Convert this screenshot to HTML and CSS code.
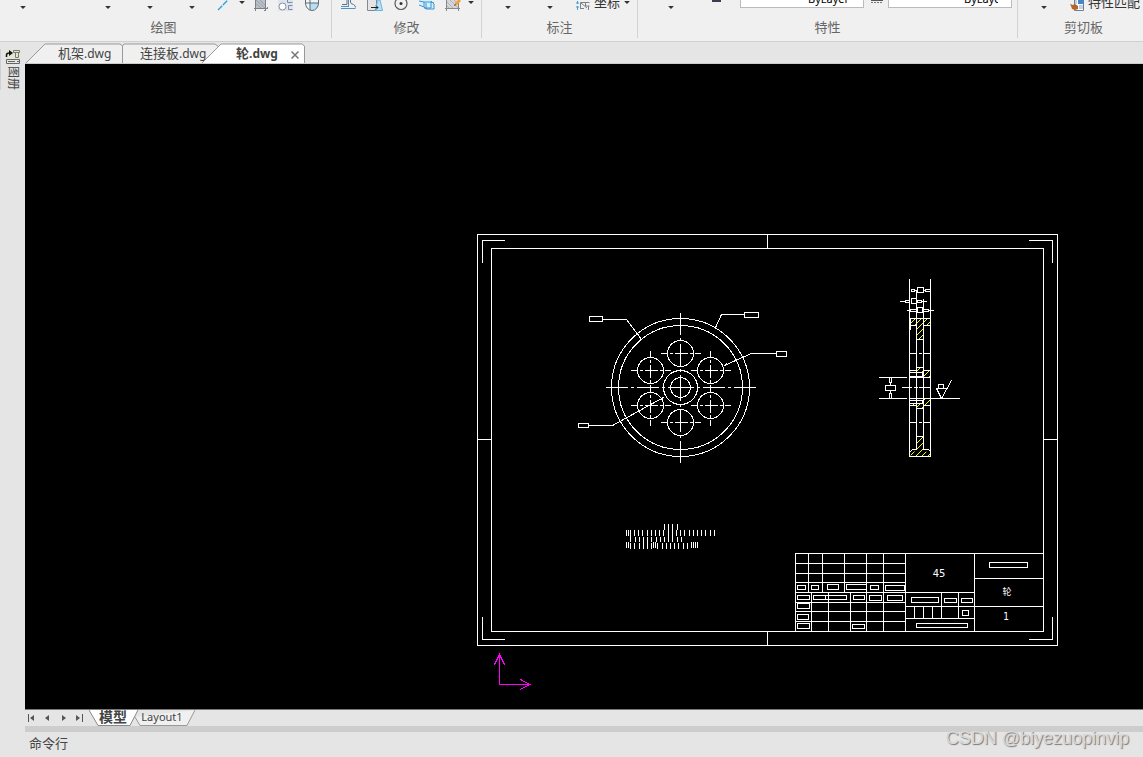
FILE: index.html
```html
<!DOCTYPE html>
<html lang="zh-CN">
<head>
<meta charset="utf-8">
<title>轮.dwg</title>
<link rel="stylesheet" href="styles.css">
</head>
<body>
<div class="app">
  <header class="ribbon">
    <section class="group group-draw">
      <div class="tools">
        <button class="tool tool-first" aria-label="直线"><span class="caret"></span></button>
        <button class="tool tool-large" aria-label="圆"><span class="caret"></span></button>
        <button class="tool tool-large" aria-label="圆弧"><span class="caret"></span></button>
        <button class="tool tool-large" aria-label="椭圆"><span class="caret"></span></button>
        <button class="tool tool-line" aria-label="构造线"><svg class="icon" width="14" height="12" viewBox="0 0 14 12"><path d="M1 10L11 0" stroke="#2a9fe0" stroke-width="1.3" stroke-dasharray="6 1"/></svg></button>
        <button class="tool tool-caret tool-caret-wide" aria-label="更多构造线"><span class="caret caret-high"></span></button>
        <button class="tool tool-fill" aria-label="图案填充"><svg class="icon" width="16" height="12" viewBox="0 0 16 12"><path d="M2 0h10v8H2z" fill="#bcc1c8"/><path d="M3 0l9 8M7 0l5 5M2 3l6 5" stroke="#989ea7"/><path d="M1 8.500h14M12.500 0v11M2.500 0v11M11 11l4-4" stroke="#7c8189"/></svg></button>
        <button class="tool" aria-label="面域"><svg class="icon" width="16" height="12" viewBox="0 0 16 12"><path d="M0 0h15v11H0z" fill="#dfe3ee"/><circle cx="4.500" cy="6.500" r="3.500" fill="#fff" stroke="#8a8fa3"/><path d="M9.500 0v2.500h5M14.500 5.500h-4v4h4" stroke="#7e88a8" fill="none"/></svg></button>
        <button class="tool" aria-label="圆柱"><svg class="icon" width="16" height="12" viewBox="0 0 16 12"><path d="M1 2a7 8 0 0 0 14 0V0H1z" fill="#eef5fa"/><path d="M6 3h9a8 8 0 0 1-9 7z" fill="#b6def5"/><path d="M1.500 0v3a6.500 7.500 0 0 0 13 0V0M1 3h13.500M6 0v10" stroke="#626a73" fill="none"/></svg></button>
      </div>
      <h2 class="group-title">绘图</h2>
    </section>
    <section class="group group-modify">
      <div class="tools">
        <button class="tool" aria-label="偏移"><svg class="icon" width="16" height="12" viewBox="0 0 16 12" fill="none"><path d="M1 4.500h5V0M9.500 0v2q0 2 3 2.500 2 1 2 3" stroke="#6a737d"/><path d="M0 6.500h8M0 8.500h14.500" stroke="#4c94c8"/><path d="M7.500 0v6" stroke="#4c94c8"/></svg></button>
        <button class="tool" aria-label="拉伸"><svg class="icon" width="16" height="12" viewBox="0 0 16 12"><path d="M0.500 0v10.500h9V0" fill="#e4e4e6" stroke="#888"/><path d="M11 0h2l2.500 10.500H8z" fill="#b7e1f8" stroke="#65b4df"/><path d="M4 7.500h7M9 5.500l2 2-2 2" stroke="#222" fill="none"/></svg></button>
        <button class="tool" aria-label="旋转"><svg class="icon" width="16" height="12" viewBox="0 0 16 12" fill="none"><circle cx="8" cy="3.500" r="6" stroke="#555a60" stroke-width="1.200"/><circle cx="8" cy="3.500" r="1.500" fill="#333"/></svg></button>
        <button class="tool" aria-label="分解"><svg class="icon" width="16" height="12" viewBox="0 0 16 12"><path d="M1 0v5l3 1h3l2 3h6V4l-2-4z" fill="#d5effc"/><path d="M0 1l5 1v5L0 5M5 2h7v6H5M5 7l2 2h8V4l-3-3M7 3v6M12 2l3 1" fill="none" stroke="#3a94cf"/></svg></button>
        <button class="tool" aria-label="编辑填充"><svg class="icon" width="16" height="12" viewBox="0 0 16 12"><path d="M2 0h11v9H2z" fill="#d4d6da"/><path d="M2 2l7 7M5 0l8 8M2 6l3 3M9 0l4 4" stroke="#aeb3b9"/><path d="M0 8.500h15M1.500 0v11M13.500 1v10" stroke="#888" fill="none"/><path d="M9 6l1-3 4-4 2 2-4 4z" fill="#efa13b"/><path d="M9 6l1-2 1 1z" fill="#444"/></svg></button>
        <button class="tool tool-caret" aria-label="更多修改"><span class="caret caret-high"></span></button>
      </div>
      <h2 class="group-title">修改</h2>
    </section>
    <section class="group group-dim">
      <div class="tools">
        <button class="tool tool-open" aria-label="标注"><span class="caret"></span></button>
        <button class="tool tool-medium" aria-label="引线"><span class="caret"></span></button>
        <button class="tool tool-text"><svg class="icon" width="14" height="12" viewBox="0 0 14 12" fill="none"><path d="M1.500 1v3M1.500 6v4M0 3h3M0 7h3" stroke="#4c9fd2"/><path d="M4.500 9V2.500h9M5 3l6 5M9.500 3v3h4M4 8.500h4M12.500 6v4" stroke="#7c8189"/></svg><span class="tool-label">坐标</span></button>
        <button class="tool tool-caret tool-caret-wide" aria-label="更多坐标"><span class="caret caret-high"></span></button>
      </div>
      <h2 class="group-title">标注</h2>
    </section>
    <section class="group group-props">
      <div class="tools">
        <button class="tool tool-props" aria-label="图层特性"><span class="caret"></span></button>
        <button class="tool" aria-label="线宽"><svg class="icon" width="10" height="12" viewBox="0 0 10 12"><path d="M0 0h9v2H0z" fill="#3a3d50"/></svg></button>
        <select class="combo combo-type" aria-label="线型"><option>ByLayer</option></select>
        <button class="tool" aria-label="比例"><svg class="icon" width="12" height="12" viewBox="0 0 12 12"><path d="M0 0.500h12" stroke="#555"/><path d="M0 2.500h12" stroke="#777" stroke-dasharray="2 1"/></svg></button>
        <select class="combo combo-weight" aria-label="线宽值"><option>ByLayer</option></select>
      </div>
      <h2 class="group-title">特性</h2>
    </section>
    <section class="group group-clip">
      <div class="tools">
        <button class="tool tool-open" aria-label="粘贴"><span class="caret"></span></button>
        <button class="tool tool-match"><svg class="icon" width="16" height="12" viewBox="0 0 16 12"><path d="M4.500 0v10.500h9V0" fill="#fff" stroke="#777e88"/><path d="M8 0h6v4H8z" fill="#4a86c4"/><path d="M5 1h2M5 3h2M9 6h4M9 8h4" stroke="#7ba4d0"/><path d="M0 4l3 1 2-1 3 2v3l-3 1-3-1-1-3z" fill="#b2662a"/></svg><span class="tool-label">特性匹配</span></button>
      </div>
      <h2 class="group-title">剪切板</h2>
    </section>
  </header>

  <div class="workspace">
    <aside class="side">
      <button class="side-tab">
        <svg width="16" height="16" viewBox="0 0 16 16" fill="none"><path d="M0 0h16v10H0z" fill="#e4e5d2"/><path d="M1.500 8V6q0-2 3-2" stroke="#111" stroke-width="1.500"/><path d="M4 1l4 3-4 3z" fill="#111"/><path d="M8.500 1.500h6v2h-6zM10.500 3.500v5h3v-5" stroke="#777"/><path d="M1.500 10.500h13v4h-13zM3 12.500h7M12 12.500h2" stroke="#666"/></svg>
        <span class="side-label">图册</span>
      </button>
    </aside>

    <main class="document">
      <nav class="file-tabs" aria-label="文件">
        <button class="file-tab">
          <svg class="file-shape" viewBox="0 0 98 20" preserveAspectRatio="none"><path d="M1 20L20 1H95L97.500 3V20" fill="#f0f0f0" stroke="#999"/></svg>
          <span class="file-name">机架<span class="file-ext">.dwg</span></span>
        </button>
        <button class="file-tab file-tab-next">
          <svg class="file-shape" viewBox="0 0 98 20" preserveAspectRatio="none"><path d="M0.500 20V3L2 1H93L97 4V20" fill="#f0f0f0" stroke="#999"/></svg>
          <span class="file-name">连接板<span class="file-ext">.dwg</span></span>
        </button>
        <button class="file-tab file-tab-active" aria-current="page">
          <svg class="file-shape" viewBox="0 0 104 20" preserveAspectRatio="none"><path d="M1 20L20 1H101L103.500 3V20" fill="#fff" stroke="#999"/></svg>
          <span class="file-name">轮<span class="file-ext">.dwg</span></span>
          <svg class="file-close" width="8" height="8" viewBox="0 0 8 8"><path d="M0.500 0.500l7 7M7.500 0.500l-7 7" stroke="#777" stroke-width="1.500"/></svg>
        </button>
      </nav>

      <div class="canvas">
        <svg class="drawing" viewBox="25 64 1118 645" preserveAspectRatio="xMinYMin meet" role="img" aria-label="轮">
          <defs>
            <clipPath id="section">
              <path d="M910 318H930V325H910ZM916 325H923V339H916ZM916 367H923V370H930V377H923V372H910V370H916ZM923 398H930V405H923V408H916V405H910V403H923ZM916 436H923V450L930 453V456H910V453L916 450Z"/>
            </clipPath>
          </defs>
          <g class="lines" transform="translate(0.5 0.5)">
            <!-- wheel, section hatching -->
            <path class="hatching" clip-path="url(#section)" d="M909 324l22-22M909 330l22-22M909 336l22-22M909 342l22-22M909 348l22-22M909 354l22-22M909 372l22-22M909 378l22-22M909 384l22-22M909 390l22-22M909 396l22-22M909 408l22-22M909 414l22-22M909 420l22-22M909 426l22-22M909 444l22-22M909 450l22-22M909 456l22-22M909 462l22-22M909 468l22-22M909 474l22-22"/>

            <!-- sheet frame -->
            <path d="M477 234H1057V645H477ZM491 248H1043V631H491ZM767 234V248M767 631V645M477 439H491M1043 439H1057"/>
            <path d="M482 262V240H504M1029 240H1052V262M482 617V639H504M1029 639H1052V617"/>

            <!-- wheel, front view -->
            <circle cx="680" cy="387" r="69"/><circle cx="680" cy="387" r="62"/>
            <circle cx="680" cy="387" r="17"/><circle cx="680" cy="387" r="10"/>
            <circle cx="680" cy="353" r="13"/><circle cx="710" cy="370" r="13"/><circle cx="710" cy="405" r="13"/>
            <circle cx="680" cy="422" r="13"/><circle cx="650" cy="405" r="13"/><circle cx="650" cy="370" r="13"/>
            <path class="axis" d="M605 387H680M755 387H680M680 312V387M680 462V387"/>
            <path d="M671 387H689M680 377V397"/>
            <path class="axis-short" d="M660 353H700M690 370H730M690 405H730M660 422H700M630 405H670M630 370H670M710 350V390M710 385V425M650 350V390M650 385V425"/>
            <path d="M589 316H602V321H589ZM603 319H626L641 339M744 312H758V317H744ZM744 314H721L715 327M776 351H786V356H776ZM776 353H751L724 365M578 423H588V427H578ZM588 425H612L663 397"/>
            <path d="M637 333L641 339M726 363L724 365"/>

            <!-- wheel, section -->
            <path d="M909 279V456M930 279V456M910 318H930M916 290V449M923 299V449M910 318V329M916 339H923M909 325H916M923 325H930M909 370H916M923 370H930M916 367H923M909 377H930M910 372H922V376H910M909 398H930M910 400H922V403H910M909 405H916M923 405H930M916 408H923M916 436H923M909 456H930M910 451L912 449H916M930 451L928 449H923"/>
            <path d="M909 353H915M919 353H921M924 353H930M909 422H915M919 422H921M924 422H930M902 387H911M914 387H917M919 387H930"/>
            <path class="boxed" d="M911 289H914V291H911ZM917 287H923V292H917ZM925 289H930V291H925ZM905 300H909V302H905ZM911 298H916V303H911ZM917 300H921V302H917ZM910 309H916V311H910ZM917 307H922V312H917ZM923 309H928V311H923Z"/>
            <path d="M900 301H905M921 301H926M907 310H910M928 310H933M914 290H917M923 290H925"/>
            <path d="M879 377H906M879 398H906M930 398H959M890 382V385M890 390V393"/>
            <path class="boxed" d="M889 377H891V382H889ZM885 385H895V390H885ZM889 393H891V398H889ZM938 384H943V388H938Z"/>
            <path d="M936 388H946M936 388L941 398L951 380"/>

            <!-- technical notes, greeked at this zoom -->
            <path d="M664 524v5M668 524v10M672 524v10M677 524v5"/>
            <path d="M626 530v5M628 530v5M630 530v11M634 530v5M638 530v5M642 530v5M647 530v5M651 530v5M655 530v5M659 530v5M663 530v5M668 530v11M672 530v11M676 530v5M680 530v5M684 530v5M689 530v5M693 530v5M697 530v5M701 530v5M705 530v5M710 530v5M714 530v5"/>
            <path d="M635 537v4M639 537v4M643 537v11M647 537v11M651 537v4M656 537v4M660 537v4M664 537v4M677 537v4M681 537v4"/>
            <path d="M626 542v5M628 542v5M630 543v5M634 543v5M639 543v5M651 543v5M653 542v5M655 542v5M657 543v5M662 543v5M666 543v5M670 543v5M674 543v5M678 543v5M683 543v5M687 543v5M691 542v5M693 542v5M695 542v5M697 542v5"/>

            <!-- title block -->
            <path d="M795 631V553H1043M795 563H905M795 573H905M795 582H905M795 592H974M795 602H905M795 611H905M795 621H905M808 553V592M822 553V592M844 553V592M811 592V631M828 592V631M850 592V631M866 553V631M883 553V631M905 553V631M974 553V631"/>
            <path d="M905 606H1043M905 618H974M941 592V618M958 592V618M914 606V618M923 606V618M932 606V618M974 578H1043"/>
            <path d="M797 585H805V589H797ZM811 585H818V589H811ZM827 584H838V589H827ZM846 584H866V589H846ZM870 585H878V589H870ZM885 585H904V590H885ZM797 595H809V599H797ZM813 595H846V599H813ZM825 595V599M853 595H864V599H853ZM869 595H881V600H869ZM887 595H902V600H887ZM797 603H809V608H797ZM797 614H808V619H797ZM797 623H809V628H797ZM852 624H864V628H852Z"/>
            <path d="M911 597H938V602H911ZM944 598H956V602H944ZM961 598H972V602H961ZM962 610H968V615H962ZM916 623H967V627H916ZM989 562H1027V567H989Z"/>

            <!-- UCS icon -->
            <path class="ucs" d="M499 654V684H529M494 664L499 654L504 664M520 679L529 684L520 689"/>
          </g>
          <g class="drawing-text">
            <text x="939" y="577">45</text>
            <text x="1007" y="595" class="drawing-name">轮</text>
            <text x="1006" y="620" class="drawing-count">1</text>
          </g>
        </svg>
      </div>

      <nav class="layout-tabs" aria-label="布局">
        <button class="step" aria-label="第一个"><svg width="8" height="8" viewBox="0 0 8 8"><path d="M1 0h1v8H1zM7 1v6L3 4z" fill="#555"/></svg></button>
        <button class="step" aria-label="上一个"><svg width="8" height="8" viewBox="0 0 8 8"><path d="M6 1v6L2 4z" fill="#555"/></svg></button>
        <button class="step" aria-label="下一个"><svg width="8" height="8" viewBox="0 0 8 8"><path d="M3 1v6l4-3z" fill="#555"/></svg></button>
        <button class="step" aria-label="最后一个"><svg width="8" height="8" viewBox="0 0 8 8"><path d="M7 0h1v8H7zM1 1v6l4-3z" fill="#555"/></svg></button>
        <button class="layout-tab layout-tab-active" aria-current="page">
          <svg class="layout-shape" viewBox="0 0 50 16" preserveAspectRatio="none"><path d="M0 0L9 15.500H41L49 0" fill="#fff" stroke="#888"/></svg>
          <span class="layout-name">模型</span>
        </button>
        <button class="layout-tab layout-tab-next">
          <svg class="layout-shape" viewBox="0 0 62 16" preserveAspectRatio="none"><path d="M1 7L6 15.500H53L61 0" fill="#f0f0f0" stroke="#999"/></svg>
          <span class="layout-name">Layout1</span>
        </button>
      </nav>
      <footer class="command"><label for="command">命令行</label><input class="command-input" id="command" type="text"></footer>
    </main>
  </div>
  <p class="watermark">CSDN @biyezuopinvip</p>
</div>
</body>
</html>
```
FILE: styles.css
```css
* {
  box-sizing: border-box;
}

body {
  margin: 0;
  background: #e5e5e5;
  color: #444;
  font: 13px/16px "Noto Sans", "Noto Sans CJK SC", sans-serif;
}

button {
  margin: 0;
  padding: 0;
  border: 0;
  background: none;
  color: inherit;
  font: inherit;
}

.app {
  position: relative;
  display: flex;
  flex-direction: column;
  height: 100vh;
  overflow: hidden;
}

/* ribbon */

.ribbon {
  display: flex;
  flex: none;
  padding-bottom: 3px;
  border-bottom: 1px solid #d0d0d0;
  background: #f0f0f0;
}

.group {
  display: flex;
  flex-direction: column;
  flex: none;
  gap: 7px;
  border-right: 1px solid #d2d2d2;
}

.group-draw { width: 332px; }
.group-modify { width: 150px; }
.group-dim { width: 156px; }
.group-props { width: 380px; }

.group-clip {
  flex: 1 0 0;
  min-width: 0;
  border-right: 0;
}

.group-title {
  margin: 0;
  padding-bottom: 3px;
  color: #666;
  font-size: 13px;
  font-weight: 400;
  line-height: 16px;
  text-align: center;
}

.group-draw .group-title { padding-right: 4px; }
.group-clip .group-title { padding-left: 6px; }

.tools {
  display: flex;
  align-items: flex-end;
  height: 12px;
}

.group-modify .tools { padding-left: 4px; }

.tool {
  display: flex;
  align-items: flex-end;
  justify-content: center;
  flex: none;
  width: 26px;
  height: 12px;
}

.tool-first {
  width: 46px;
  margin-right: 41px;
}

.tool-large { width: 42px; }
.tool-medium { width: 32px; }
.tool-open { width: 52px; }
.tool-props { width: 66px; }
.tool-line { width: 22px; }
.tool-fill { width: 24px; }
.tool-caret { width: 10px; }
.tool-caret-wide { width: 14px; }

.tool-text,
.tool-match {
  gap: 4px;
  width: auto;
}

.tool-text { padding-left: 10px; }
.tool-match { gap: 2px; }

.tool-label {
  color: #333;
  line-height: 20px;
  white-space: nowrap;
}

.icon {
  display: block;
  flex: none;
}

.caret {
  margin-bottom: 3px;
  border: 3px solid transparent;
  border-top-color: #333;
  border-bottom: 0;
  border-radius: 1px;
}

.caret-high { margin-bottom: 8px; }

.combo {
  flex: none;
  width: 124px;
  height: 20px;
  margin-bottom: 4px;
  border: 1px solid #bbb;
  border-radius: 0;
  background: #fff;
  color: #000;
  font: 11px/16px "Noto Sans", sans-serif;
  appearance: none;
}

.combo-type {
  margin-left: 10px;
  padding: 2px 14px 0 67px;
}

.combo-weight {
  margin-left: -2px;
  padding: 2px 13px 0 75px;
}

/* workspace */

.workspace {
  display: flex;
  flex: 1;
  min-height: 0;
}

.side {
  flex: none;
  width: 25px;
  padding-top: 7px;
}

.side-tab {
  display: flex;
  flex-direction: column;
  align-items: center;
  gap: 1px;
  width: 24px;
  border-left: 1px solid #d0d0d0;
}

.side-label {
  color: #444;
  font-size: 12px;
  line-height: 16px;
  writing-mode: vertical-rl;
  text-orientation: sideways;
}

.document {
  display: flex;
  flex: 1;
  flex-direction: column;
  min-width: 0;
}

.file-tabs {
  display: flex;
  align-items: flex-end;
  flex: none;
  height: 22px;
  border-bottom: 1px solid #ccc;
}

.file-tab {
  position: relative;
  display: flex;
  align-items: center;
  width: 98px;
  height: 20px;
  padding-left: 33px;
  white-space: nowrap;
}

.file-tab-next {
  margin-left: -1px;
  padding-left: 18px;
}

.file-tab-active {
  gap: 13px;
  width: 104px;
  margin-left: -19px;
  padding-left: 35px;
  font-weight: 700;
}

.file-ext { font-size: 12px; }

.file-shape,
.layout-shape {
  position: absolute;
  inset: 0;
  width: 100%;
  height: 100%;
}

.file-name,
.file-close,
.layout-name {
  position: relative;
}

.file-close { margin-top: 3px; }

.canvas {
  flex: 1;
  min-height: 0;
  background: #000;
}

.drawing {
  display: block;
  width: 100%;
  height: 100%;
}

.lines {
  fill: none;
  stroke: #fff;
  stroke-width: 1;
  stroke-linecap: square;
  shape-rendering: crispEdges;
}

.axis,
.axis-short {
  stroke-linecap: butt;
}

.axis { stroke-dasharray: 22 3 3 3; }
.axis-short { stroke-dasharray: 7 2 3 2 13 2 3 2; }
.boxed { fill: #000; }

.lines .hatching { stroke: #ff0; }
.lines .ucs { stroke: #f0f; }

.drawing-text {
  fill: #fff;
  font: 11px "DejaVu Sans Condensed", "Liberation Sans", "Noto Sans CJK SC", sans-serif;
  text-anchor: middle;
}

.drawing-name { font-size: 9px; }
.drawing-count { font-size: 10px; }

/* layout switcher and command line */

.layout-tabs {
  display: flex;
  flex: none;
  height: 17px;
  border-top: 1px solid #777;
}

.step {
  display: flex;
  align-items: center;
  width: 16px;
  padding-left: 2px;
}

.layout-tab {
  position: relative;
  width: 50px;
  height: 16px;
  font-size: 12px;
  line-height: 14px;
}

.layout-tab-active {
  z-index: 1;
  padding: 0 2px 3px 0;
  font-size: 14px;
  font-weight: 700;
  line-height: 12px;
}

.layout-tab-next {
  width: 62px;
  margin-left: -5px;
  padding: 0 6px 2px 0;
  font-size: 11px;
}

.command {
  display: flex;
  align-items: center;
  flex: none;
  height: 31px;
  padding: 0 4px 3px;
  border-top: 6px solid #cdcdcd;
}

.command-input {
  flex: 1;
  min-width: 0;
  border: 0;
  background: none;
  outline: 0;
  font: inherit;
}

.watermark {
  position: absolute;
  right: 14px;
  bottom: 7px;
  margin: 0;
  color: #d8d8d8;
  font: 18px/24px "Liberation Sans", sans-serif;
  text-shadow: 1px 1px 1px #777;
}
```
